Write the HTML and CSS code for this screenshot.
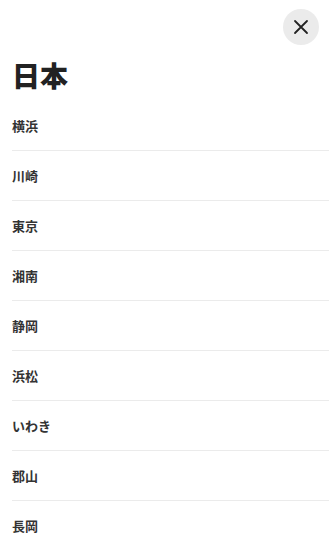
FILE: index.html
```html
<!DOCTYPE html>
<html lang="ja">
<head>
    <meta charset="UTF-8">
    <meta name="viewport" content="width=device-width, initial-scale=1.0">
    <title>日本</title>
    <link rel="stylesheet" href="styles.css">
</head>
<body>
    <div class="sheet">
        <div class="sheet-header">
            <button class="close" aria-label="閉じる">
                <svg width="16" height="16" viewBox="0 0 16 16">
                    <path d="M2 2 L14 14 M14 2 L2 14" stroke="#222" stroke-width="1.8" stroke-linecap="round"/>
                </svg>
            </button>
        </div>
        <h1 class="title">日本</h1>
        <ul class="cities">
            <li>横浜</li>
            <li>川崎</li>
            <li>東京</li>
            <li>湘南</li>
            <li>静岡</li>
            <li>浜松</li>
            <li>いわき</li>
            <li>郡山</li>
            <li>長岡</li>
        </ul>
    </div>
</body>
</html>
```

FILE: styles.css
```css
body {
    margin: 0;
    background: #fff;
    color: #222;
    font-family: "Noto Sans CJK JP", "Noto Sans", sans-serif;
}

.sheet {
    padding-left: 12px;
}

.sheet-header {
    display: flex;
    justify-content: flex-end;
    padding: 9px 10px 0 0;
}

.close {
    width: 36px;
    height: 36px;
    border: none;
    border-radius: 50%;
    background: #ebebeb;
    display: flex;
    align-items: center;
    justify-content: center;
    padding: 0;
    cursor: pointer;
}

.title {
    margin: 10px 0 0;
    font-size: 28px;
    line-height: 40px;
    font-weight: 900;
}

.cities {
    list-style: none;
    margin: 6px 0 0;
    padding: 0;
}

.cities li {
    height: 49px;
    display: flex;
    align-items: center;
    border-bottom: 1px solid #ebebeb;
    font-size: 13px;
    font-weight: 600;
    color: #333;
}
```
